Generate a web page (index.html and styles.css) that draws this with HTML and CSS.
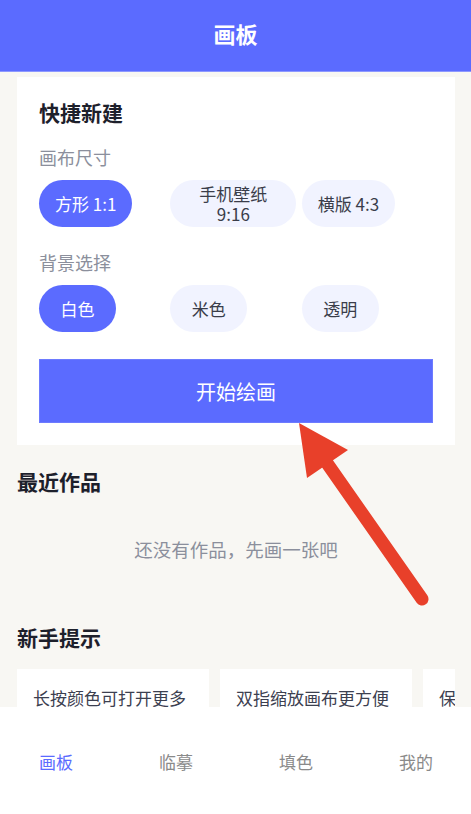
FILE: index.html
```html
<!DOCTYPE html>
<html lang="zh-CN">
<head>
    <meta charset="UTF-8">
    <meta name="viewport" content="width=device-width, initial-scale=1.0">
    <title>画板</title>
    <link rel="stylesheet" href="styles.css">
</head>
<body>
    <header class="topbar">画板</header>

    <main class="content">
        <section class="card">
            <h2 class="card-title">快捷新建</h2>

            <div class="field-label">画布尺寸</div>
            <div class="chip-grid">
                <button class="chip active">方形 1:1</button>
                <button class="chip">手机壁纸 9:16</button>
                <button class="chip">横版 4:3</button>
            </div>

            <div class="field-label">背景选择</div>
            <div class="chip-grid">
                <button class="chip active">白色</button>
                <button class="chip">米色</button>
                <button class="chip">透明</button>
            </div>

            <button class="start-button">开始绘画</button>
        </section>

        <h2 class="section-title">最近作品</h2>
        <div class="empty">还没有作品，先画一张吧</div>

        <h2 class="section-title tips-title">新手提示</h2>
        <div class="tips">
            <div class="tip">长按颜色可打开更多</div>
            <div class="tip">双指缩放画布更方便</div>
            <div class="tip">保存作品后可在我的里查看</div>
        </div>
    </main>

    <nav class="tabbar">
        <span class="tab active">画板</span>
        <span class="tab">临摹</span>
        <span class="tab">填色</span>
        <span class="tab">我的</span>
    </nav>

    <!-- annotation arrow -->
    <svg class="pointer" width="471" height="814" viewBox="0 0 471 814">
        <line x1="422" y1="599" x2="322" y2="456" stroke="#e8402a" stroke-width="13" stroke-linecap="round"/>
        <polygon points="299,423 348,450 307,478" fill="#e8402a"/>
    </svg>
</body>
</html>
```

FILE: styles.css
```css
* {
    box-sizing: border-box;
}
body {
    margin: 0;
    height: 100vh;
    display: flex;
    flex-direction: column;
    position: relative;
    overflow: hidden;
    font-family: "Noto Sans CJK SC", "Noto Sans", sans-serif;
    background-color: #f8f7f3;
    color: #1d202b;
}
.topbar {
    height: 72px;
    flex-shrink: 0;
    padding-bottom: 5px;
    background-color: #5b6bff;
    border-bottom: 1px solid #8d98ff;
    color: #ffffff;
    font-size: 22px;
    font-weight: bold;
    display: flex;
    align-items: center;
    justify-content: center;
}
.content {
    flex: 1;
    overflow: hidden;
    padding: 5px 16px 0 17px;
}
.card {
    background-color: #ffffff;
    padding: 21px 22px 22px;
}
.card-title, .section-title {
    margin: 0;
    font-size: 21px;
    line-height: 28px;
    font-weight: bold;
    color: #1d202b;
}
.field-label {
    margin-top: 18px;
    font-size: 18px;
    line-height: 26px;
    color: #8b8f9c;
}
.chip-grid + .field-label {
    margin-top: 22px;
}
.chip-grid {
    display: grid;
    grid-template-columns: repeat(3, 1fr);
    margin-top: 10px;
}
.chip {
    justify-self: start;
    height: 47px;
    min-width: 77px;
    max-width: 126px;
    padding: 0 16px;
    border: none;
    border-radius: 24px;
    background-color: #f1f3ff;
    color: #3a3d4a;
    font-family: inherit;
    font-size: 17px;
    line-height: 20px;
    text-align: center;
}
.chip.active {
    background-color: #5b6bff;
    color: #ffffff;
}
.start-button {
    display: block;
    width: 100%;
    height: 64px;
    margin-top: 27px;
    background-color: #5b6bff;
    border: 1px solid #6d7bff;
    color: #ffffff;
    font-family: inherit;
    font-size: 20px;
}
.section-title {
    margin-top: 22px;
}
.empty {
    padding: 41px 0 39px;
    text-align: center;
    font-size: 18.5px;
    line-height: 26px;
    color: #8b8f9c;
}
.tips-title {
    margin-top: 22px;
}
.tips {
    display: flex;
    gap: 11px;
    margin-top: 18px;
    overflow: hidden;
}
.tip {
    flex: 0 0 192px;
    background-color: #ffffff;
    padding: 16px 16px;
    font-size: 17px;
    line-height: 26px;
    color: #3c4050;
    white-space: nowrap;
    overflow: hidden;
}
.tabbar {
    height: 107px;
    flex-shrink: 0;
    background-color: #ffffff;
    display: flex;
    justify-content: space-between;
    align-items: flex-start;
    padding: 43px 38px 0 39px;
}
.tab {
    font-size: 17px;
    line-height: 24px;
    color: #8a8a8a;
}
.tab.active {
    color: #5b6bff;
}
.pointer {
    position: absolute;
    top: 0;
    left: 0;
    pointer-events: none;
}
```
